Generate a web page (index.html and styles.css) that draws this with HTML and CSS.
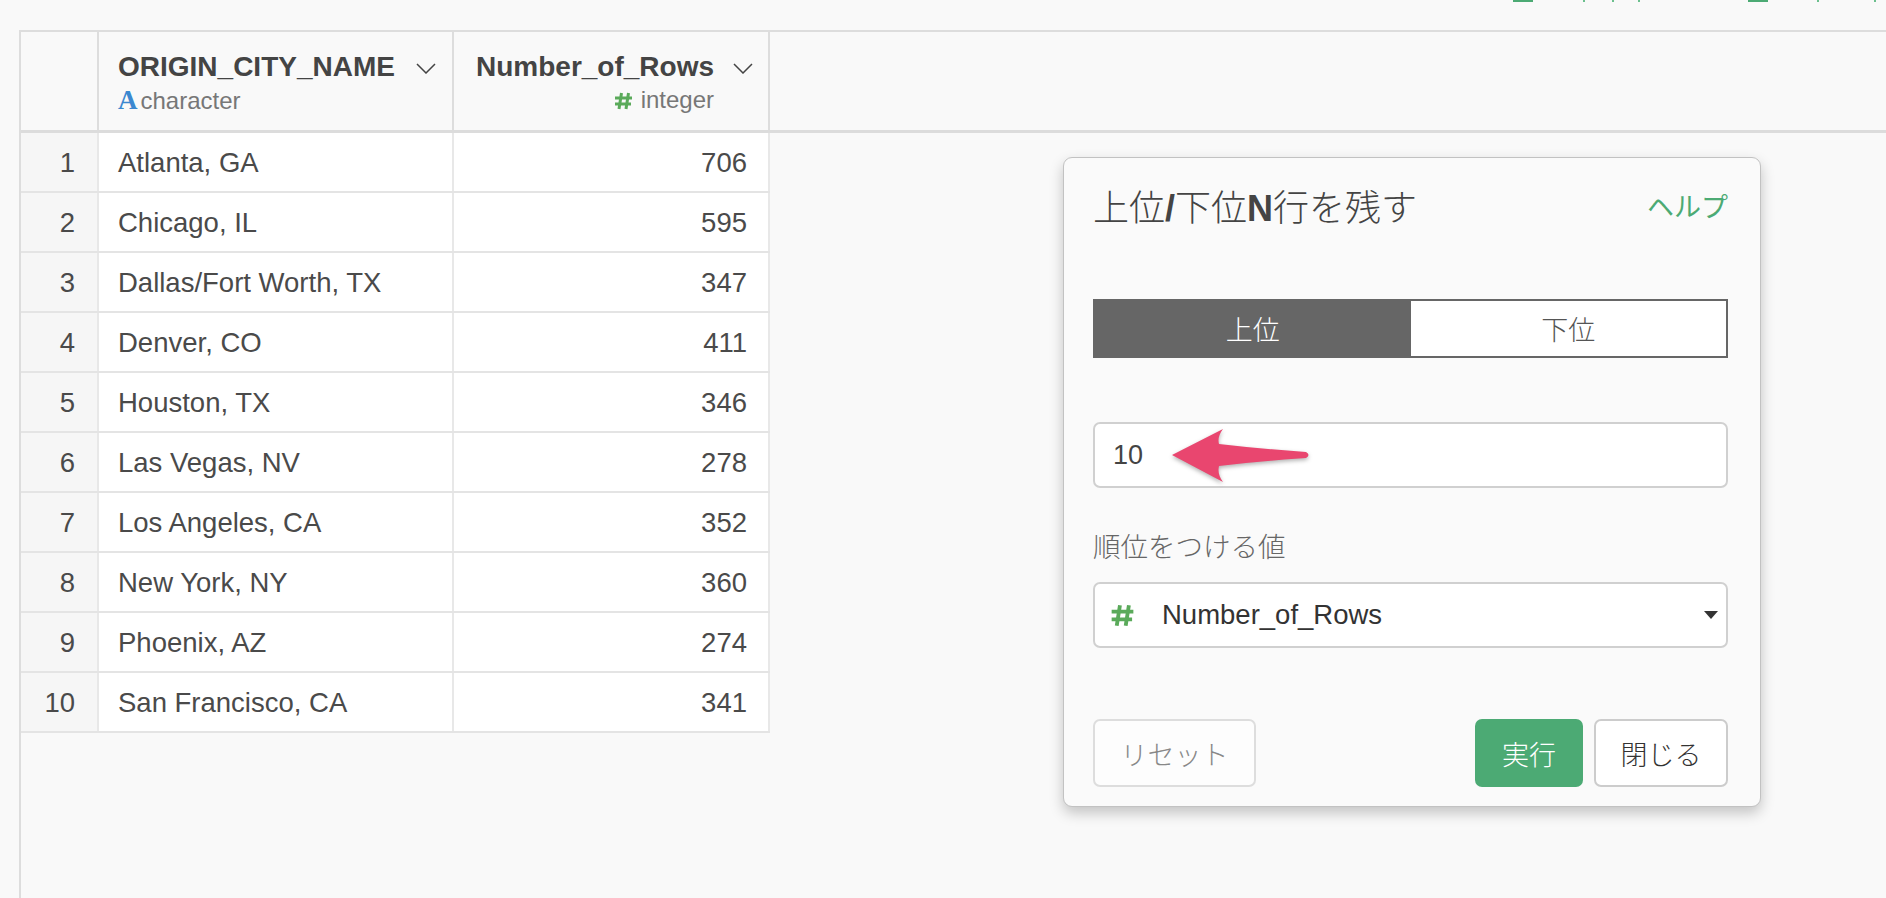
FILE: index.html
```html
<!DOCTYPE html>
<html lang="ja">
<head>
    <meta charset="UTF-8">
    <meta name="viewport" content="width=device-width, initial-scale=1.0">
    <title>上位/下位N行を残す</title>
    <link rel="stylesheet" href="styles.css">
</head>
<body>
    <div class="toolbar">
        <span class="tb-bar first"></span>
        <span class="tb-dot d1"></span>
        <span class="tb-dot d2"></span>
        <span class="tb-dot d3"></span>
        <span class="tb-bar second"></span>
        <span class="tb-dot d4"></span>
        <span class="tb-dot d5"></span>
    </div>

    <div class="grid">
        <div class="grid-head">
            <div class="hcell rownum"></div>
            <div class="hcell col-city">
                <div class="col-info">
                    <div class="col-name">ORIGIN_CITY_NAME</div>
                    <div class="col-type"><span class="type-a">A</span>character</div>
                </div>
                <svg class="chevron" width="20" height="11" viewBox="0 0 20 11"><polyline points="1,1 10,10 19,1" fill="none" stroke="#444" stroke-width="1.5"/></svg>
            </div>
            <div class="hcell col-count">
                <div class="col-info right">
                    <div class="col-name">Number_of_Rows</div>
                    <div class="col-type">
                        <svg class="hash" width="19" height="18" viewBox="0 0 19 18"><path d="M7.5 1 L5 17 M14.5 1 L12 17 M1 6 H18 M1 12 H17" stroke="#5aaa5a" stroke-width="3" fill="none"/></svg>integer
                    </div>
                </div>
                <svg class="chevron" width="20" height="11" viewBox="0 0 20 11"><polyline points="1,1 10,10 19,1" fill="none" stroke="#444" stroke-width="1.5"/></svg>
            </div>
        </div>

        <div class="grid-body">
            <div class="row"><div class="cell rownum">1</div><div class="cell city">Atlanta, GA</div><div class="cell count">706</div></div>
            <div class="row"><div class="cell rownum">2</div><div class="cell city">Chicago, IL</div><div class="cell count">595</div></div>
            <div class="row"><div class="cell rownum">3</div><div class="cell city">Dallas/Fort Worth, TX</div><div class="cell count">347</div></div>
            <div class="row"><div class="cell rownum">4</div><div class="cell city">Denver, CO</div><div class="cell count">411</div></div>
            <div class="row"><div class="cell rownum">5</div><div class="cell city">Houston, TX</div><div class="cell count">346</div></div>
            <div class="row"><div class="cell rownum">6</div><div class="cell city">Las Vegas, NV</div><div class="cell count">278</div></div>
            <div class="row"><div class="cell rownum">7</div><div class="cell city">Los Angeles, CA</div><div class="cell count">352</div></div>
            <div class="row"><div class="cell rownum">8</div><div class="cell city">New York, NY</div><div class="cell count">360</div></div>
            <div class="row"><div class="cell rownum">9</div><div class="cell city">Phoenix, AZ</div><div class="cell count">274</div></div>
            <div class="row"><div class="cell rownum">10</div><div class="cell city">San Francisco, CA</div><div class="cell count">341</div></div>
        </div>
    </div>

    <div class="dialog">
        <div class="dialog-head">
            <div class="dialog-title">上位<b>/</b>下位<b>N</b>行を残す</div>
            <a class="help">ヘルプ</a>
        </div>

        <div class="toggle">
            <div class="seg active">上位</div>
            <div class="seg">下位</div>
        </div>

        <div class="field">
            10
            <!-- annotation arrow -->
            <svg class="arrow" width="160" height="70" viewBox="0 0 160 70">
                <path d="M11 34 L62 8 Q56 16 58 23 Q100 28 145 31 Q150 34 145 37 Q100 40 58 45 Q56 53 62 61 Z" fill="#e9466f"/>
            </svg>
        </div>

        <div class="field-label">順位をつける値</div>
        <div class="select">
            <svg class="hash big" width="25" height="23" viewBox="0 0 19 18"><path d="M7.5 1 L5 17 M14.5 1 L12 17 M1 6 H18 M1 12 H17" stroke="#5aaa5a" stroke-width="3" fill="none"/></svg>
            <span class="select-text">Number_of_Rows</span>
            <svg class="caret" width="14" height="8" viewBox="0 0 14 8"><polygon points="0,0 14,0 7,8" fill="#333"/></svg>
        </div>

        <div class="buttons">
            <button class="btn reset">リセット</button>
            <button class="btn run">実行</button>
            <button class="btn close">閉じる</button>
        </div>
    </div>
</body>
</html>
```

FILE: styles.css
```css
/* Page */
* {
    box-sizing: border-box;
}

body {
    margin: 0;
    width: 1886px;
    height: 898px;
    overflow: hidden;
    position: relative;
    background-color: #f9f9f9;
    font-family: "Liberation Sans", "Noto Sans CJK JP", sans-serif;
    color: #444;
}

/* Toolbar (cut off at the top) */
.toolbar {
    height: 30px;
    display: flex;
    align-items: flex-start;
    padding-right: 10px;
}

.tb-bar {
    width: 20px;
    height: 2px;
    background: #4caa74;
}

.tb-dot {
    width: 2px;
    height: 2px;
    background: #6cc08e;
}

.tb-bar.first { margin-left: auto; }
.d1 { margin-left: 50px; }
.d2 { margin-left: 27px; }
.d3 { margin-left: 24px; }
.tb-bar.second { margin-left: 108px; }
.d4 { margin-left: 49px; }
.d5 { margin-left: 55px; }

/* Grid */
.grid {
    margin-left: 19px;
    height: 868px;
    border-top: 2px solid #ddd;
    border-left: 2px solid #ddd;
}

.grid-head {
    display: flex;
    height: 101px;
    border-bottom: 3px solid #dcdcdc;
}

.hcell {
    border-right: 2px solid #ddd;
    padding-top: 18px;
    display: flex;
    justify-content: space-between;
    align-items: flex-start;
}

.hcell.rownum { width: 78px; }

.hcell.col-city {
    width: 355px;
    padding-left: 19px;
    padding-right: 16px;
}

.hcell.col-count {
    width: 316px;
    padding-left: 22px;
    padding-right: 15px;
}

.col-info.right {
    text-align: right;
}

.col-name {
    font-size: 28px;
    line-height: 34px;
    font-weight: bold;
    color: #444;
}

.col-type {
    margin-top: 2px;
    font-size: 24px;
    line-height: 28px;
    color: #777;
}

.type-a {
    font-family: "Liberation Serif", serif;
    font-weight: bold;
    font-size: 27px;
    color: #3b88d0;
    margin-right: 3px;
}

.hash {
    vertical-align: -2px;
    margin-right: 8px;
}

.chevron {
    margin-top: 13px;
}

/* Rows */
.row {
    display: flex;
    width: 749px;
    height: 60px;
    border-bottom: 2px solid #e4e4e4;
}

.cell {
    display: flex;
    align-items: center;
    padding-top: 2px;
    font-size: 27.5px;
    color: #4a4a4a;
    border-right: 2px solid #e8e8e8;
    background: #fff;
}

.cell.rownum {
    width: 78px;
    justify-content: flex-end;
    padding-right: 22px;
    background: #f6f6f6;
}

.cell.city {
    width: 355px;
    padding-left: 19px;
}

.cell.count {
    width: 316px;
    justify-content: flex-end;
    padding-right: 21px;
}

/* Dialog */
.dialog {
    position: absolute;
    left: 1063px;
    top: 157px;
    width: 698px;
    padding: 27px 32px 19px 29px;
    background: #fafafa;
    border: 1.5px solid #c2c2c2;
    border-radius: 9px;
    box-shadow: 0 6px 14px rgba(0, 0, 0, 0.22);
}

.dialog-head {
    display: flex;
    justify-content: space-between;
    align-items: center;
    height: 40px;
}

.dialog-title {
    font-size: 36px;
    font-weight: 300;
    color: #444;
}

.dialog-title b {
    font-family: "Liberation Sans", sans-serif;
    font-weight: bold;
}

.help {
    font-size: 27px;
    color: #4caa74;
}

.toggle {
    margin-top: 74px;
    display: flex;
    height: 59px;
    border: 2px solid #666;
}

.seg {
    flex: 1;
    display: flex;
    justify-content: center;
    align-items: center;
    font-size: 27px;
    font-weight: 300;
    color: #555;
    background: #fff;
}

.seg.active {
    background: #666;
    color: #fff;
}

.field {
    position: relative;
    margin-top: 64px;
    height: 66px;
    display: flex;
    align-items: center;
    padding-left: 18px;
    font-size: 27px;
    color: #444;
    background: #fff;
    border: 2px solid #d0d0d0;
    border-radius: 7px;
}

.arrow {
    position: absolute;
    left: 66px;
    top: -3px;
    filter: drop-shadow(0 2px 2px rgba(0, 0, 0, 0.3));
}

.field-label {
    margin-top: 43px;
    font-size: 27.5px;
    line-height: 34px;
    font-weight: 300;
    color: #666;
}

.select {
    margin-top: 17px;
    height: 66px;
    display: flex;
    align-items: center;
    padding-left: 15px;
    padding-right: 8px;
    background: #fff;
    border: 2px solid #d0d0d0;
    border-radius: 7px;
}

.hash.big {
    margin-right: 27px;
    vertical-align: 0;
}

.select-text {
    font-size: 27.5px;
    color: #333;
}

.caret {
    margin-left: auto;
}

.buttons {
    margin-top: 71px;
    display: flex;
    gap: 11px;
}

.btn {
    height: 68px;
    font-family: "Liberation Sans", "Noto Sans CJK JP", sans-serif;
    font-size: 27px;
    font-weight: 300;
    border-radius: 7px;
    padding: 0;
}

.btn.reset {
    width: 163px;
    margin-right: auto;
    background: #fdfdfd;
    color: #888;
    border: 2px solid #ddd;
}

.btn.run {
    width: 108px;
    background: #4caa74;
    color: #fff;
    border: none;
}

.btn.close {
    width: 134px;
    background: #fff;
    color: #333;
    border: 2px solid #ccc;
}
```
